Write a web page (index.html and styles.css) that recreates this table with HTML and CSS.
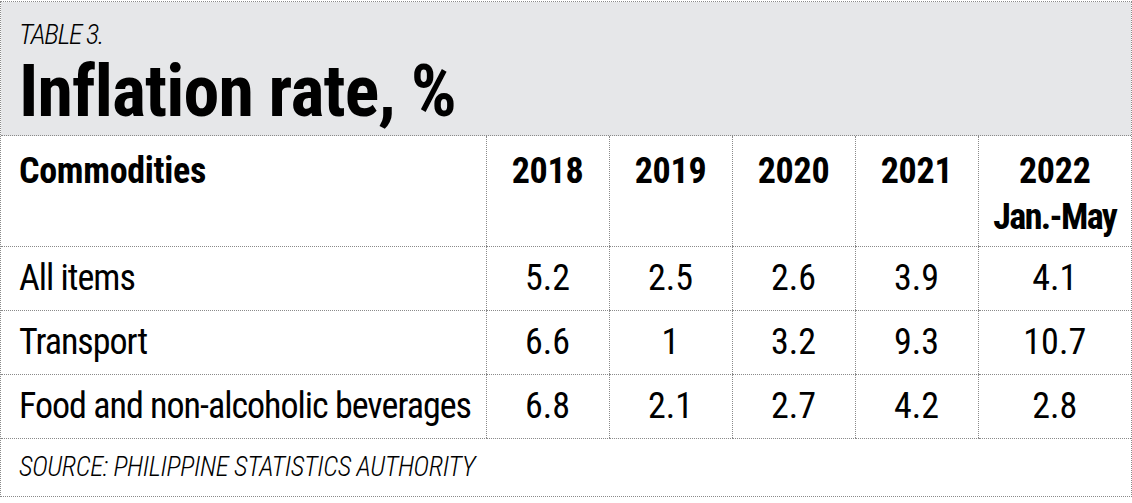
FILE: index.html
```html
<!DOCTYPE html>
<html lang="en">
<head>
<meta charset="utf-8">
<title>Inflation rate, %</title>
<link rel="stylesheet" href="styles.css">
</head>
<body>
<div class="sheet">
  <div class="head">
    <div class="kicker">TABLE 3.</div>
    <h1 class="title">Inflation rate, %</h1>
  </div>
  <table class="data">
    <colgroup>
      <col class="c-name">
      <col class="c-year">
      <col class="c-year">
      <col class="c-year">
      <col class="c-year">
      <col class="c-last">
    </colgroup>
    <thead>
      <tr class="hrow">
        <th class="name">Commodities</th>
        <th>2018</th>
        <th>2019</th>
        <th>2020</th>
        <th>2021</th>
        <th>2022<br><span class="period">Jan.-May</span></th>
      </tr>
    </thead>
    <tbody>
      <tr>
        <td class="name">All items</td>
        <td>5.2</td><td>2.5</td><td>2.6</td><td>3.9</td><td>4.1</td>
      </tr>
      <tr>
        <td class="name">Transport</td>
        <td>6.6</td><td>1</td><td>3.2</td><td>9.3</td><td>10.7</td>
      </tr>
      <tr>
        <td class="name">Food and non-alcoholic beverages</td>
        <td>6.8</td><td>2.1</td><td>2.7</td><td>4.2</td><td>2.8</td>
      </tr>
      <tr class="srow">
        <td class="source" colspan="6">SOURCE: PHILIPPINE STATISTICS AUTHORITY</td>
      </tr>
    </tbody>
  </table>
</div>
</body>
</html>
```
FILE: styles.css
```css
html, body {
  margin: 0;
  padding: 0;
  background: #ffffff;
}

body {
  font-family: "Roboto", "Liberation Sans", sans-serif;
  font-stretch: 75%;
  color: #000;
}

.sheet {
  width: 1132px;
  box-sizing: border-box;
  margin-top: 1px;
  border: 1px dotted #8a8a8a;
}

.head {
  background: #e6e7e9;
  height: 134px;
  box-sizing: border-box;
  padding: 17px 18px 0;
  border-bottom: 1px dotted #8a8a8a;
}

.kicker {
  font-size: 28px;
  font-style: italic;
  font-weight: 300;
  letter-spacing: -1.3px;
  line-height: 32px;
  white-space: nowrap;
}

.title {
  margin: 0;
  font-size: 72px;
  font-weight: 700;
  letter-spacing: -0.9px;
  line-height: 82px;
  white-space: nowrap;
}

.data {
  width: 100%;
  border-collapse: collapse;
  table-layout: fixed;
}

.c-name { width: 485px; }
.c-year { width: 123px; }
.c-last { width: auto; }

.data th,
.data td {
  padding: 0;
  text-align: center;
  font-size: 36px;
  white-space: nowrap;
  border-left: 1px dotted #8a8a8a;
  border-bottom: 1px dotted #8a8a8a;
}

.data th:first-child,
.data td:first-child {
  border-left: 0;
}

.data th {
  font-weight: 700;
  vertical-align: top;
  height: 110px;
  padding-top: 12px;
  line-height: 46px;
  box-sizing: border-box;
  letter-spacing: -0.3px;
}

.data th .period {
  letter-spacing: -1.6px;
}

.data td {
  font-weight: 400;
  height: 63px;
  vertical-align: middle;
  line-height: 40px;
}

.data .name {
  text-align: left;
  padding-left: 18px;
}

.data td.name {
  letter-spacing: -1px;
}

.data .srow td {
  border-bottom: 0;
  height: 57px;
}

.data .source {
  text-align: left;
  padding-left: 18px;
  font-size: 27px;
  font-style: italic;
  font-weight: 300;
  letter-spacing: -0.4px;
}
```
